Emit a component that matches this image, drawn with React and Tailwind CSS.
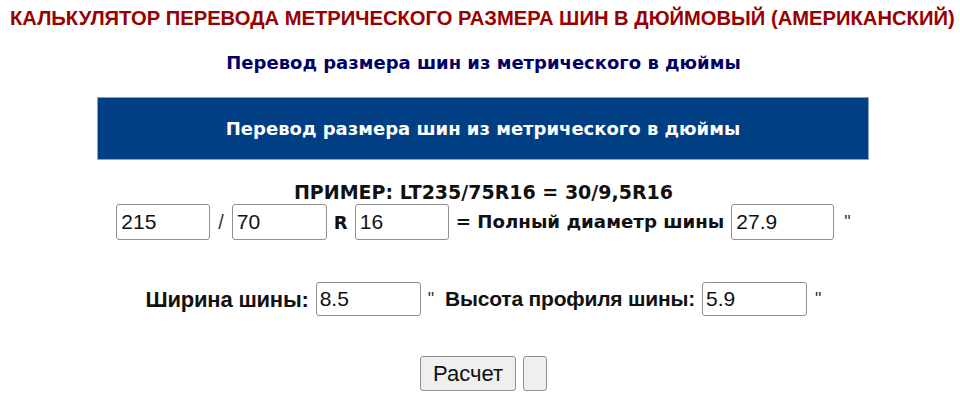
export default function App() {
  return (
    <div className="w-[960px] h-[406px] overflow-hidden bg-white font-['Liberation_Sans',Arial,sans-serif]">
      <h1 className="pl-[10px] pt-[6px] h-[40px] text-[20.2px] leading-[24px] font-bold text-[#990000] whitespace-nowrap">
        КАЛЬКУЛЯТОР ПЕРЕВОДА МЕТРИЧЕСКОГО РАЗМЕРА ШИН В ДЮЙМОВЫЙ (АМЕРИКАНСКИЙ)
      </h1>
      <div className="pl-[7px]">
        <h2 className="h-[57px] pt-[11px] text-center text-[18px] leading-[24px] font-bold text-[#000066] font-['DejaVu_Sans',Verdana,sans-serif]">
          Перевод размера шин из метрического в дюймы
        </h2>
        <div className="ml-[90px] w-[772px] h-[63px] flex items-center justify-center bg-[#003f84] border border-[#8aa2c4] text-white text-[18px] font-bold font-['DejaVu_Sans',Verdana,sans-serif]">
          Перевод размера шин из метрического в дюймы
        </div>
        <div className="mt-[20px] text-center text-[19px] leading-[24px] font-bold text-[#111] font-['DejaVu_Sans',Verdana,sans-serif]">
          ПРИМЕР: LT235/75R16 = 30/9,5R16
        </div>
        <div className="flex items-center justify-center gap-[7px] h-[36px] text-[#111]">
          <input defaultValue="215" className="w-[94px] h-[36px] px-[4px] text-[21px] border border-[#8f8f8f] rounded-[3px]" />
          <span className="text-[20px] text-[#333] px-[1px]">/</span>
          <input defaultValue="70" className="w-[95px] h-[36px] px-[4px] text-[21px] border border-[#8f8f8f] rounded-[3px]" />
          <span className="text-[18px] font-bold font-['DejaVu_Sans',Verdana,sans-serif]">R</span>
          <input defaultValue="16" className="w-[94px] h-[36px] px-[4px] text-[21px] border border-[#8f8f8f] rounded-[3px]" />
          <span className="text-[18.2px] font-bold font-['DejaVu_Sans',Verdana,sans-serif]">= Полный диаметр шины</span>
          <input defaultValue="27.9" className="w-[103px] h-[36px] px-[4px] text-[21px] border border-[#8f8f8f] rounded-[3px]" />
          <span className="text-[18px] text-[#333] pl-[3px]">"</span>
        </div>
        <div className="mt-[42px] flex items-center justify-center gap-[7px] h-[34px] text-[#111]">
          <span className="text-[22px] tracking-[-0.2px] font-bold">Ширина шины:</span>
          <input defaultValue="8.5" className="w-[105px] h-[34px] px-[3px] text-[21px] border border-[#8f8f8f] rounded-[3px]" />
          <span className="flex items-center gap-[11px] text-[21px] whitespace-nowrap">
            <span className="text-[#333] text-[18px]">"</span>
            <span className="font-bold tracking-[-0.2px]">Высота профиля шины:</span>
          </span>
          <input defaultValue="5.9" className="w-[105px] h-[34px] px-[3px] text-[21px] border border-[#8f8f8f] rounded-[3px]" />
          <span className="text-[18px] text-[#333] pl-[1px]">"</span>
        </div>
        <div className="mt-[40px] flex justify-center gap-[7px]">
          <button className="w-[96px] h-[35px] text-[22px] bg-[#efefef] border border-[#8f8f8f] rounded-[3px] text-[#111]">Расчет</button>
          <button className="w-[24px] h-[35px] bg-[#efefef] border border-[#8f8f8f] rounded-[3px]"></button>
        </div>
      </div>
    </div>
  );
}
